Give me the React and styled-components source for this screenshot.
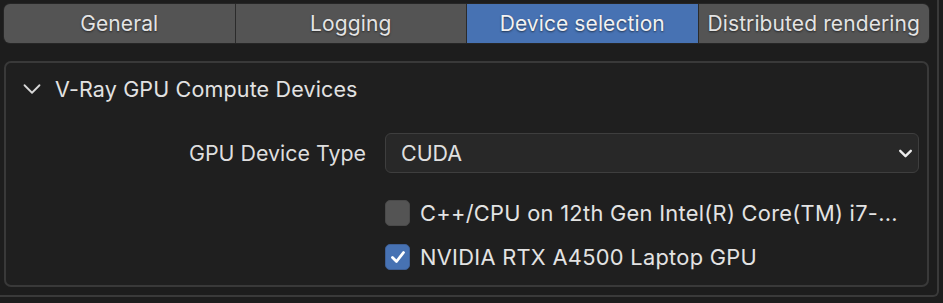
import React, { useState } from 'react';
import styled, { createGlobalStyle } from 'styled-components';

const GlobalStyle = createGlobalStyle`
  html, body {
    margin: 0;
    padding: 0;
    background: #1d1d1d;
  }
  body {
    font-family: Inter, "Noto Sans", "DejaVu Sans", sans-serif;
    color: #e3e3e3;
  }
`;

const Frame = styled.div`
  width: 939px;
  height: 297px;
  box-sizing: border-box;
  border-right: 2px solid #3a3a3a;
  border-bottom: 2px solid #3a3a3a;
  border-bottom-right-radius: 6px;
  padding: 4px 8px 0 4px;
`;

const TabBar = styled.div`
  display: grid;
  grid-template-columns: repeat(4, 1fr);
  gap: 1px;
  height: 39px;
  background: #2b2b2b;
  border-radius: 6px;
  overflow: hidden;
  box-shadow: 0 0 0 1px #262626;
`;

const Tab = styled.div`
  display: flex;
  align-items: center;
  justify-content: center;
  font-size: 21px;
  letter-spacing: 0.1px;
  color: ${p => (p.active ? '#f2f2f2' : '#e4e4e4')};
  background: ${p => (p.active ? '#4772b3' : '#545454')};
  text-shadow: 0 1px 2px rgba(0, 0, 0, 0.55);
  white-space: nowrap;
`;

const Panel = styled.div`
  margin-top: 18px;
  height: 226px;
  box-sizing: border-box;
  border: 2px solid #393939;
  border-radius: 7px;
  background: #1f1f1f;
`;

const PanelHeader = styled.div`
  display: flex;
  align-items: center;
  gap: 11px;
  height: 52px;
  padding: 0 0 0 14px;
  font-size: 21.5px;
  letter-spacing: 0.15px;
  color: #e2e2e2;
`;

const Body = styled.div`
  display: flex;
  flex-direction: column;
  padding-top: 16px;
`;

const Row = styled.div`
  display: grid;
  grid-template-columns: 1fr 534px;
  column-gap: 19px;
  align-items: center;
  padding-right: 8px;
  height: ${p => p.h || 44}px;
`;

const Label = styled.div`
  text-align: right;
  font-size: 21.4px;
  color: #dedede;
`;

const Select = styled.div`
  display: flex;
  align-items: center;
  justify-content: space-between;
  height: 40px;
  box-sizing: border-box;
  padding: 0 4px 0 15px;
  background: #282828;
  border: 1.5px solid #3e3e3e;
  border-radius: 6px;
  font-size: 21.4px;
  color: #e0e0e0;
`;

const Check = styled.label`
  grid-column: 2;
  display: flex;
  align-items: center;
  gap: 10px;
  font-size: 21.8px;
  letter-spacing: 0.3px;
  color: #e3e3e3;
  white-space: nowrap;
  cursor: pointer;
`;

const Box = styled.span`
  width: 25px;
  height: 26px;
  box-sizing: border-box;
  border-radius: 5px;
  background: ${p => (p.on ? '#4772b3' : '#545454')};
  border: 1px solid ${p => (p.on ? '#3e5f95' : '#4a4a4a')};
  display: flex;
  align-items: center;
  justify-content: center;
`;

const Chevron = ({ size = 16, color = '#e0e0e0', width = 2 }) => (
  <svg width={size} height={size} viewBox="0 0 16 16" fill="none">
    <path d="M3 5.5 L8 10.5 L13 5.5" stroke={color} strokeWidth={width} strokeLinecap="round" strokeLinejoin="round" />
  </svg>
);

const Tick = () => (
  <svg width="18" height="18" viewBox="0 0 18 18" fill="none">
    <path d="M3.5 9.5 L7.5 13.5 L14.5 4.5" stroke="#fff" strokeWidth="2.8" strokeLinecap="round" strokeLinejoin="round" />
  </svg>
);

const tabs = ['General', 'Logging', 'Device selection', 'Distributed rendering'];

const App = () => {
  const [active, setActive] = useState(2);
  const [devices, setDevices] = useState([
    { name: 'C++/CPU on 12th Gen Intel(R) Core(TM) i7-...', on: false },
    { name: 'NVIDIA RTX A4500 Laptop GPU', on: true },
  ]);

  const toggle = i =>
    setDevices(d => d.map((x, j) => (j === i ? { ...x, on: !x.on } : x)));

  return (
    <>
      <GlobalStyle />
      <Frame>
        <TabBar>
          {tabs.map((t, i) => (
            <Tab key={t} active={i === active} onClick={() => setActive(i)}>
              {t}
            </Tab>
          ))}
        </TabBar>

        <Panel>
          <PanelHeader>
            <Chevron size={24} color="#d8d8d8" width={1.2} />
            <span>V-Ray GPU Compute Devices</span>
          </PanelHeader>

          <Body>
            <Row h={44}>
              <Label>GPU Device Type</Label>
              <Select>
                <span>CUDA</span>
                <Chevron size={17} color="#ececec" width={2.2} />
              </Select>
            </Row>

            <Row h={16} />

            {devices.map((d, i) => (
              <Row key={d.name} h={44}>
                <Check onClick={() => toggle(i)}>
                  <Box on={d.on}>{d.on && <Tick />}</Box>
                  {d.name}
                </Check>
              </Row>
            ))}
          </Body>
        </Panel>
      </Frame>
    </>
  );
};

export default App;
